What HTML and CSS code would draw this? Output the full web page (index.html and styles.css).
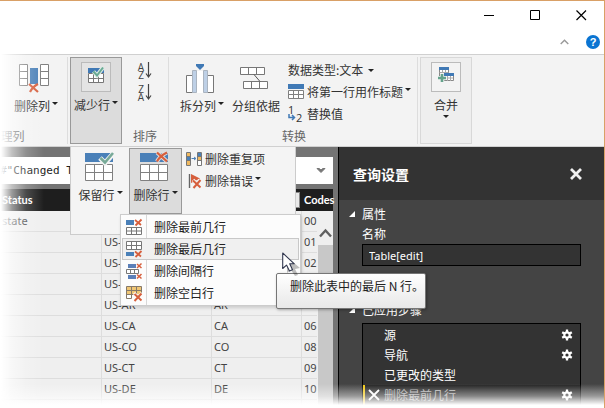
FILE: index.html
```
<!DOCTYPE html>
<html lang="zh-CN">
<head>
<meta charset="utf-8">
<title>查询编辑器</title>
<link rel="stylesheet" href="styles.css">
</head>
<body>
<div class="app">
  <header class="titlebar">
    <div class="caption">
      <button class="caption-btn" type="button" aria-label="最小化"><svg width="11" height="11" viewBox="0 0 11 11"><path d="M0 5.5h10" stroke="#000"/></svg></button>
      <button class="caption-btn" type="button" aria-label="最大化"><svg width="11" height="11" viewBox="0 0 11 11"><path d="M.5.5h9v9h-9z" stroke="#000" fill="none"/></svg></button>
      <button class="caption-btn" type="button" aria-label="关闭窗口"><svg width="11" height="11" viewBox="0 0 11 11"><path d="M.5.5l9.500 9.500M10 .5L.5 10" stroke="#000" stroke-width="1.2"/></svg></button>
    </div>
    <div class="help">
      <button class="plain" type="button" aria-label="折叠功能区"><svg width="9" height="6" viewBox="0 0 9 6"><path d="M.7 5L4.500 1.200 8.300 5" stroke="#999" stroke-width="1.4" fill="none"/></svg></button>
      <button class="help-btn" type="button" aria-label="帮助">?</button>
    </div>
  </header>

  <nav class="ribbon">
    <section class="group group-manage">
      <div class="group-body">
        <button class="big" type="button">
          <svg width="30" height="30" viewBox="0 0 30 30"><path d="M.5.5h8v21h-8zM.5 7.500h8M.5 14.500h8M21.500.5h8v21h-8zM21.500 7.500h8M21.500 14.500h8" fill="#fff" stroke="#808080"/><path d="M11 4h8v16h-8z" fill="#4a80b8"/><path d="M10 20l9 8M19 20c-4 2-6 4-8 8" stroke="#d65f3d" stroke-width="2.200" fill="none"/></svg>
          <span class="big-label">删除列<i class="caret"></i></span>
        </button>
      </div>
      <h2 class="group-name">管理列</h2>
    </section>

    <div class="drop">
      <button class="tile tile-open" type="button" aria-expanded="true">
        <span class="frame"><svg width="17" height="17" viewBox="0 0 17 17"><path d="M0 1h16v5H0z" fill="#4079b5"/><path d="M.5 6.500h15v9H.5zM.5 11.500h15M5.500 6.500v9M10.500 6.500v9" fill="#fff" stroke="#777"/><path d="M5.500 4.500l3.500 4 6-8" stroke="#dcebe5" stroke-width="4" fill="none"/><path d="M5.500 4.500l3.500 4 6-8" stroke="#68aa93" stroke-width="2" fill="none"/></svg></span>
        <span class="big-label">减少行<i class="caret"></i></span>
      </button>

      <div class="gallery">
        <button class="gallery-btn" type="button">
          <svg width="30" height="30" viewBox="0 0 30 30"><path d="M1 1h28v9H1z" fill="#4a80b8"/><path d="M1.500 12.500h27v16h-27zM1.500 20.500h27M10.500 12.500v16M19.500 12.500v16" fill="#fff" stroke="#808080"/><path d="M16 6l5 5L29 2" stroke="#f4f4f4" stroke-width="5" fill="none"/><path d="M16.500 6l4.500 4.500L29 1" stroke="#78aa98" stroke-width="2.600" fill="none"/></svg>
          <span class="big-label">保留行<i class="caret"></i></span>
        </button>
        <div class="drop">
          <button class="gallery-btn gallery-open" type="button" aria-expanded="true">
            <svg width="30" height="30" viewBox="0 0 30 30"><path d="M1 1h28v9H1z" fill="#4a80b8"/><path d="M1.500 12.500h27v16h-27zM1.500 20.500h27M10.500 12.500v16M19.500 12.500v16" fill="#fff" stroke="#808080"/><path d="M18 .5l10 9M28 .5c-4 2-8 5-10 9" stroke="#e4dcda" stroke-width="4" fill="none"/><path d="M18 .5l10 9M28 .5c-4 2-8 5-10 9" stroke="#d65f3d" stroke-width="2.200" fill="none"/></svg>
            <span class="big-label">删除行<i class="caret"></i></span>
          </button>

          <div class="menu">
            <button class="menu-item" type="button">
              <span class="gutter"><svg width="17" height="17" viewBox="0 0 17 17"><path d="M0 1h8v5H0z" fill="#4a80b8"/><path d="M.5 8.500h15v7H.5zM.5 12h15M5.500 8.500v7M10.500 8.500v7" fill="#fff" stroke="#777"/><path d="M9 1l6 5M15.500 .5L9.500 6.500" stroke="#d65f3d" stroke-width="1.800"/></svg></span>删除最前几行
            </button>
            <button class="menu-item menu-hot" type="button">
              <span class="gutter"><svg width="17" height="17" viewBox="0 0 17 17"><path d="M.5 .5h15v8H.5zM.5 4.500h15M5.500 .5v8M10.500 .5v8" fill="#fff" stroke="#777"/><path d="M0 11h8v4H0z" fill="#4a80b8"/><path d="M9 10.500l6 5M15.500 10L9.500 16" stroke="#d65f3d" stroke-width="1.800"/></svg></span>删除最后几行
            </button>
            <button class="menu-item" type="button">
              <span class="gutter"><svg width="17" height="17" viewBox="0 0 17 17"><path d="M2 1h8v4H2zM2 12h8v4H2z" fill="#5b7fb8"/><path d="M.5 6.500h12v4H.5zM4.500 6.500v4M8.500 6.500v4" fill="#fff" stroke="#777"/><path d="M11 1l4.500 4M15.500 .5L11 5M11 11.500l4.500 4M15.500 11L11 15.500" stroke="#d65f3d" stroke-width="1.500"/></svg></span>删除间隔行
            </button>
            <button class="menu-item" type="button">
              <span class="gutter"><svg width="17" height="17" viewBox="0 0 17 17"><path d="M.5 1.500h15v8H.5z" fill="#f0c674"/><path d="M.5 9.500h5v4h-5z" fill="#fff"/><path d="M5.500 13.500h-5v-12h15v7M.5 5.500h15M.5 9.500h9M5.500 1.500v12M10.500 1.500v8" fill="none" stroke="#85796a"/><path d="M8 8l8 8M16 8l-8 8" stroke="#fff" stroke-width="3"/><path d="M8.500 9l7 6.500M15.500 8.500l-7 7.500" stroke="#d65f3d" stroke-width="2"/></svg></span>删除空白行
            </button>
            <div class="tooltip" role="tooltip">删除此表中的最后 N 行。</div>
            <svg class="pointer" width="22" height="26" viewBox="0 0 22 26"><path d="M5 5v16l4-3 4 6 3-1-3-6 5-1z" fill="#000" opacity=".25"/><path d="M.7 1v15.500l3.800-3.400 3 6 3-1.300-2.800-6h4.600z" fill="#fff" stroke="#333950" stroke-width="1.100" stroke-linejoin="round"/></svg>
          </div>
        </div>
        <div class="gallery-list">
          <button class="line-btn" type="button"><svg width="17" height="15" viewBox="0 0 17 15"><path d="M.5.5h4v13h-4zM11.500.5h4v13h-4z" fill="#fff" stroke="#777"/><path d="M1 1h3v3H1zM1 9h3v4H1zM12 4h3v4h-3z" fill="#f0b960"/><path d="M1 5h3v3H1zM12 1h3v3h-3z" fill="#4a80b8"/><path d="M5.500 6.500h4M8 5l2 1.500L8 8" stroke="#4a80b8" fill="none"/><path d="M.5 4.500h4M.5 8.500h4M11.500 4.500h4M11.500 8.500h4" stroke="#777"/></svg>删除重复项</button>
          <button class="line-btn" type="button"><svg width="17" height="16" viewBox="0 0 17 16"><path d="M3.500 1v14" stroke="#666" stroke-width="1.400"/><path d="M5 1l9 4.500L5 10z" fill="#d65f3d"/><path d="M7 7l7 7M14 7l-7 8" stroke="#f3f3f3" stroke-width="3.500"/><path d="M7 7.500l7.500 7M14.500 7l-7 8" stroke="#d65f3d" stroke-width="2"/></svg>删除错误<i class="caret"></i></button>
        </div>
      </div>
    </div>

    <section class="group group-sort">
      <div class="group-body sort-body">
        <button class="sort-btn" type="button" aria-label="升序排序"><span>A<br>Z</span><svg width="7" height="17" viewBox="0 0 7 17"><path d="M3.500 0v15M1 11.500L3.500 15 6 11.500" stroke="#444" stroke-width="1.200" fill="none"/></svg></button>
        <button class="sort-btn" type="button" aria-label="降序排序"><span>Z<br>A</span><svg width="7" height="17" viewBox="0 0 7 17"><path d="M3.500 0v15M1 11.500L3.500 15 6 11.500" stroke="#444" stroke-width="1.200" fill="none"/></svg></button>
      </div>
      <h2 class="group-name">排序</h2>
    </section>

    <section class="group group-transform">
      <div class="group-body">
        <button class="big" type="button">
          <svg width="30" height="30" viewBox="0 0 30 30"><path d="M1.500 11.500h6v17h-6zM22.500 11.500h6v17h-6z" fill="#fff" stroke="#777"/><path d="M7.500 6.500h4v22h-4zM18.500 6.500h4v22h-4z" fill="#bed0e6" stroke="#aab4c0"/><path d="M12 7h6v22h-6z" fill="#fff"/><path d="M11 0h8v2l-4 4-4-4z" fill="#4079b5"/></svg>
          <span class="big-label">拆分列<i class="caret"></i></span>
        </button>
        <button class="big" type="button">
          <svg width="30" height="30" viewBox="0 0 30 30"><path d="M1.500 3.500h24v7h-24zM9.500 3.500v7M17.500 3.500v7M4.500 17.500h24v7h-24zM12.500 17.500v7M20.500 17.500v7" fill="#fff" stroke="#777"/><path d="M15 10.500l6 7" stroke="#555"/></svg>
          <span class="big-label">分组依据</span>
        </button>
        <div class="lines">
          <button class="line-btn" type="button">数据类型:文本<i class="caret caret-mid"></i></button>
          <button class="line-btn" type="button"><svg width="17" height="16" viewBox="0 0 17 16"><path d="M0 0h16v5H0z" fill="#4079b5"/><path d="M.5 6.500h15v8H.5zM.5 10.500h15M5.500 6.500v8M10.500 6.500v8" fill="#fff" stroke="#808080"/></svg>将第一行用作标题<i class="caret"></i></button>
          <button class="line-btn" type="button"><span class="replace"><span>1</span><svg width="8" height="7" viewBox="0 0 8 7"><path d="M1 0v3.500h5M4 1l2.500 2.500L4 6" stroke="#4079b5" stroke-width="1.500" fill="none"/></svg><span>2</span></span>替换值</button>
        </div>
      </div>
      <h2 class="group-name">转换</h2>
    </section>

    <button class="tile" type="button">
      <span class="frame"><svg width="17" height="17" viewBox="0 0 17 17"><path d="M1.500 2.500h9v8h-9z" fill="#fff" stroke="#888"/><path d="M1.500 5.500h9M4.500 2v8M7.500 2v8" stroke="#aaa"/><path d="M1 0h10v3H1z" fill="#4079b5"/><path d="M6.500 8.500h9v5h-9z" fill="#fff" stroke="#888"/><path d="M6 11h9M9.500 8v6M12.500 8v6" stroke="#aaa"/><path d="M6 6h10v3H6z" fill="#4079b5"/><path d="M4 6v10M0 11h9" stroke="#f3f3f3" stroke-width="4"/><path d="M4 7v8M0 11h8" stroke="#65a38c" stroke-width="2.600"/></svg></span>
      <span class="big-label big-label-stack">合并<i class="caret"></i></span>
    </button>
  </nav>

  <div class="workspace">
    <main class="data">
      <div class="formula">
        <input class="formula-input" type="text" aria-label="公式" value="#&quot;Changed Type&quot;">
        <button class="plain" type="button" aria-label="展开公式栏"><svg width="8" height="7" viewBox="0 0 8 7"><path d="M0 1.500h2.200L4 3l1.800-1.500H8L4 5.500z" fill="#777" stroke="#777"/></svg></button>
      </div>
      <div class="grid">
        <table>
          <colgroup><col class="col-status"><col class="col-iso"><col class="col-abbr"><col></colgroup>
          <thead><tr><th>Status</th><th></th><th><button class="filter" type="button" aria-label="筛选"></button></th><th>Codes</th></tr></thead>
          <tbody>
            <tr><td>state</td><td></td><td></td><td>00</td></tr>
            <tr><td></td><td>US-AL</td><td>AL</td><td>01</td></tr>
            <tr><td></td><td>US-AK</td><td>AK</td><td>02</td></tr>
            <tr><td></td><td>US-AZ</td><td>AZ</td><td>04</td></tr>
            <tr><td></td><td>US-AR</td><td>AR</td><td>05</td></tr>
            <tr><td></td><td>US-CA</td><td>CA</td><td>06</td></tr>
            <tr><td></td><td>US-CO</td><td>CO</td><td>08</td></tr>
            <tr><td></td><td>US-CT</td><td>CT</td><td>09</td></tr>
            <tr><td></td><td>US-DE</td><td>DE</td><td>10</td></tr>
            <tr><td></td><td></td><td></td><td></td></tr>
          </tbody>
        </table>
        <div class="scrollbar"><svg width="13" height="10" viewBox="0 0 13 10"><path d="M1 8.500l5.500-6 5.500 6" stroke="#606060" stroke-width="2.400" fill="none"/></svg><div class="thumb"></div></div>
      </div>
    </main>

    <aside class="settings">
      <div class="settings-head">
        <h1>查询设置</h1>
        <button class="plain" type="button" aria-label="关闭"><svg width="12" height="12" viewBox="0 0 12 12"><path d="M1 1l10 10M11 1L1 11" stroke="#f0f0f0" stroke-width="2.800"/></svg></button>
      </div>
      <div class="settings-body">
        <h2 class="section-name"><svg width="7" height="7" viewBox="0 0 7 7"><path d="M6 0v6H0z" fill="#fff"/></svg>属性</h2>
        <label class="field-label" for="query-name">名称</label>
        <input class="field" id="query-name" type="text" value="Table[edit]">
        <h2 class="section-name section-steps"><svg width="7" height="7" viewBox="0 0 7 7"><path d="M6 0v6H0z" fill="#fff"/></svg>已应用步骤</h2>
        <svg class="defs" width="0" height="0"><symbol id="gear" viewBox="0 0 12 12"><path d="M6 .5v11M1.200 3.200l9.600 5.600M1.200 8.800l9.600-5.600" stroke="#fff" stroke-width="2.300"/><circle cx="6" cy="6" r="3.700" fill="#fff"/><circle cx="6" cy="6" r="1.600" fill="#333"/></symbol></svg>
        <ul class="steps">
          <li><span class="step-name">源</span><button class="plain" type="button" aria-label="设置源"><svg width="12" height="12"><use href="#gear"/></svg></button></li>
          <li><span class="step-name">导航</span><button class="plain" type="button" aria-label="设置导航"><svg width="12" height="12"><use href="#gear"/></svg></button></li>
          <li><span class="step-name">已更改的类型</span></li>
          <li class="step-current"><button class="plain" type="button" aria-label="删除步骤"><svg width="12" height="12" viewBox="0 0 12 12"><path d="M1 1l10 10M11 1L1 11" stroke="#fff" stroke-width="1.800"/></svg></button><span class="step-name">删除最前几行</span><button class="plain" type="button" aria-label="设置步骤"><svg width="12" height="12"><use href="#gear"/></svg></button></li>
        </ul>
      </div>
    </aside>
  </div>
</div>
</body>
</html>
```
FILE: styles.css
```
* { box-sizing: border-box; }
body {
  margin: 0;
  background: #fff;
  color: #333;
  font: 12px/16px "Noto Sans CJK SC", sans-serif;
}
button, input { font: inherit; color: inherit; border: 0; background: none; padding: 0; margin: 0; }
h1, h2, ul { margin: 0; padding: 0; font: inherit; list-style: none; }
svg { display: block; flex: none; overflow: visible; }

.app {
  position: relative;
  display: flex;
  flex-direction: column;
  height: 100vh;
  overflow: hidden;
  border: solid #d9a066;
  border-width: 1px 1px 0 0;
}
/* Soft white edges at the left and the bottom */
.app::before, .app::after { content: ""; position: absolute; pointer-events: none; z-index: 2; }
.app::before {
  inset: -1px auto 0 0;
  width: 44px;
  background: linear-gradient(to right, #fff 1px, rgba(255,255,255,.55) 12px, rgba(255,255,255,.2) 26px, rgba(255,255,255,0));
}
.app::after {
  inset: auto -1px 0 0;
  height: 24px;
  z-index: 6;
  background: linear-gradient(to bottom, rgba(255,255,255,0), rgba(255,255,255,.45) 12px, #fff 21px);
}

/* Title bar */
.titlebar { flex: none; }
.caption { display: flex; justify-content: flex-end; height: 28px; }
.caption-btn { width: 46px; display: grid; place-items: center; }
.help { display: flex; justify-content: flex-end; align-items: center; gap: 17px; height: 25px; padding-right: 4px; }
.plain { display: grid; place-items: center; }
.help-btn {
  width: 14px;
  height: 14px;
  border-radius: 50%;
  background: #0a74d2;
  color: #fff;
  font: bold 11px/14px "Liberation Sans", sans-serif;
  text-align: center;
}

/* Ribbon */
.ribbon {
  position: relative;
  z-index: 1;
  flex: none;
  display: flex;
  height: 93px;
  padding: 2px 0;
  background: #f3f3f3;
  border: solid #d0d0d0;
  border-width: 1px 0;
}
.group { display: flex; flex-direction: column; margin-right: 2px; border-right: 1px solid #ddd; }
.group-body { flex: 1; display: flex; }
.group-name { height: 16px; text-align: center; color: #666; }
.group-manage { width: 122px; margin-left: -54px; }
.group-manage .group-body { justify-content: flex-end; padding-right: 9px; }
.group-sort { width: 47px; }
.group-transform { width: 247px; }
.group-transform .group-body { gap: 8px; padding-left: 9px; }
.big { display: flex; flex-direction: column; align-items: center; align-self: flex-start; gap: 4px; padding-top: 7px; white-space: nowrap; }
.big > svg, .gallery-btn > svg { margin-right: 4px; }
.big-label { display: flex; align-items: center; gap: 2px; white-space: nowrap; }
.big-label-stack { flex-direction: column; }
.caret { flex: none; border: solid transparent; border-width: 3px 3px 0; border-top-color: #222; margin-bottom: 6px; }
.caret-mid { margin: 0 0 0 3px; }

.drop { position: relative; display: flex; }
.tile {
  width: 52px;
  display: flex;
  flex-direction: column;
  align-items: center;
  gap: 5px;
  padding-top: 4px;
  background: #eee;
  border: 1px solid #d8d8d8;
}
.tile-open { background: #dcdcdc; border-color: #999; }
.frame { width: 30px; height: 30px; display: grid; place-items: center; border: 1px solid #bbb; background: #f3f3f3; padding-bottom: 4px; }
.tile-open .frame { background: #e4e4e4; }

.sort-body { flex-direction: column; align-items: center; gap: 5px; padding-top: 5px; }
.sort-btn { display: flex; align-items: center; gap: 1px; color: #444; font: 10px/8px "Open Sans", sans-serif; }

.lines { display: flex; flex-direction: column; padding-top: 2px; }
.line-btn { display: flex; align-items: center; gap: 2px; height: 22px; white-space: nowrap; text-align: left; }
.replace { display: grid; grid-template-columns: 8px 7px; width: 17px; font: 11px/8px "Open Sans", sans-serif; }
.replace span:first-child { grid-column: 1; }
.replace svg { grid-column: 1; grid-row: 2; }
.replace span:last-child { grid-column: 2; grid-row: 2; }

/* Row gallery */
.gallery {
  position: absolute;
  top: 90px;
  left: 0;
  z-index: 3;
  display: flex;
  width: 226px;
  height: 88px;
  padding: 1px 0 0 3px;
  background: #f4f4f4;
  border: solid #ccc;
  border-width: 0 1px 1px;
}
.gallery-btn { width: 53px; height: 66px; display: flex; flex-direction: column; align-items: center; gap: 5px; padding-top: 3px; border: 1px solid transparent; margin-right: 2px; }
.gallery-open { background: #dcdcdc; border-color: #999; }
.gallery-list { display: flex; flex-direction: column; padding-left: 2px; }

.menu {
  position: absolute;
  top: 66px;
  left: -9px;
  width: 181px;
  padding: 1px;
  background: #fcfcfc linear-gradient(#d8d8d8, #d8d8d8) 25px 0 / 1px 100% no-repeat;
  border: 1px solid #ccc;
  box-shadow: 1px 2px 3px rgba(0,0,0,.15);
}
.menu-item { display: flex; align-items: center; gap: 9px; width: 100%; height: 22px; border: 1px solid transparent; white-space: nowrap; color: #222; }
.menu-hot { background: #f0f0f0; border-color: #c8c8c8; }
.gutter { width: 22px; display: grid; place-items: center; }
.tooltip {
  position: absolute;
  top: 58px;
  left: 155px;
  width: 150px;
  height: 36px;
  padding: 4px 0 0 13px;
  white-space: nowrap;
  color: #222;
  background: linear-gradient(#fff, #e8e8e8);
  border: 1px solid #767676;
  border-radius: 2px;
  box-shadow: 1px 1px 3px rgba(0,0,0,.3);
}
.pointer { position: absolute; left: 161px; top: 37px; }

/* Data area */
.workspace { flex: 1; min-height: 0; display: flex; background: #747474; }
.data { flex: 1; min-width: 0; padding: 10px 5px 0 0; }
.formula { display: flex; height: 27px; padding-right: 8px; background: #fff; }
.formula-input { flex: 1; min-width: 0; font: 11px/16px "DejaVu Sans Mono", monospace; color: #222; }
.grid { position: relative; margin-top: 5px; background: #efefef; }
table { width: 100%; table-layout: fixed; border-collapse: separate; border-spacing: 0; font: 11px/16px "Noto Sans", sans-serif; }
.col-status { width: 102px; }
.col-iso { width: 110px; }
.col-abbr { width: 90px; }
th { height: 22px; padding: 0 2px; background: #1e1e1e; color: #fff; text-align: left; font-family: Lato, sans-serif; }
td { height: 21px; padding: 0 2px; border: solid #ddd; border-width: 0 1px 1px 0; color: #444; }
.filter { display: block; width: 15px; height: 16px; margin-left: auto; background: #e8e8e8; border: 1px solid #888; }
.scrollbar { position: absolute; top: 22px; right: 0; bottom: 0; width: 16px; display: flex; flex-direction: column; align-items: center; gap: 7px; padding-top: 17px; background: #efefef; }
.thumb { flex: 1; width: 15px; background: #c8c8c8; }

/* Query settings */
.settings { flex: none; width: 266px; background: #444; border-left: 1px solid #000; color: #fff; }
.settings-head { display: flex; align-items: center; justify-content: space-between; height: 53px; padding: 0 22px 0 14px; background: #333; }
.settings-head h1 { font-weight: bold; font-size: 14px; line-height: 20px; }
.settings-body { padding: 4px 23px 0 10px; }
.section-name { display: flex; align-items: center; gap: 6px; height: 20px; }
.section-steps { margin-top: 34px; }
.field-label { display: block; height: 20px; padding: 2px 0 0 13px; }
.field { display: block; width: calc(100% - 13px); height: 22px; margin-left: 13px; padding: 0 6px; background: #333; border: 1px solid #000; font: 11px/16px "Noto Sans", sans-serif; }
.defs { position: absolute; }
.steps { margin: 3px 0 0 13px; padding-top: 1px; height: 120px; background: #333; border: 1px solid #000; }
.steps li { display: flex; align-items: center; height: 20px; padding: 0 7px 0 21px; }
.step-name { flex: 1; }
.steps .step-current { gap: 4px; padding-left: 3px; background: #222; border-left: 2px solid #f2c811; color: #aaa; }
```
